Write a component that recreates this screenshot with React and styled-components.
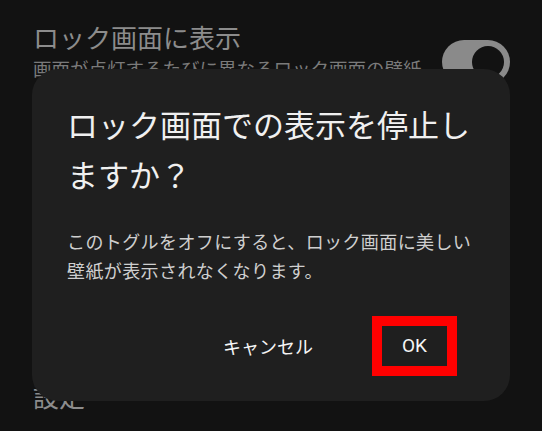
import styled, { createGlobalStyle } from 'styled-components';

const GlobalStyle = createGlobalStyle`
    html, body {
        margin: 0;
        padding: 0;
        background-color: #121212;
    }
    body {
        font-family: "Noto Sans CJK JP", "Noto Sans", sans-serif;
    }
`;

const Screen = styled.div`
    position: relative;
    width: 542px;
    height: 431px;
    overflow: hidden;
    background-color: #121212;
`;

const Page = styled.div`
    display: flex;
    flex-direction: column;
    padding: 19px 32px 0 33px;
`;

const SettingRow = styled.div`
    display: flex;
    justify-content: space-between;
    align-items: flex-start;
`;

const SettingText = styled.div`
    display: flex;
    flex-direction: column;
    width: 392px;
`;

const SettingTitle = styled.span`
    font-size: 26px;
    line-height: 36px;
    color: #8c8c8c;
`;

const SettingDesc = styled.span`
    font-size: 18.5px;
    line-height: 26px;
    color: #7a7a7a;
`;

const Toggle = styled.div`
    display: flex;
    align-items: center;
    justify-content: flex-end;
    width: 68px;
    height: 44px;
    margin-top: 21px;
    padding-right: 6px;
    box-sizing: border-box;
    border-radius: 22px;
    background-color: #8a8a8a;
`;

const Thumb = styled.div`
    width: 32px;
    height: 32px;
    border-radius: 50%;
    background-color: #121212;
`;

const SectionHeader = styled.span`
    margin-top: 271px;
    font-size: 26px;
    line-height: 36px;
    color: #8c8c8c;
`;

const Dialog = styled.div`
    position: absolute;
    left: 32px;
    top: 69px;
    width: 478px;
    box-sizing: border-box;
    padding: 30px 35px 25px 35px;
    border-radius: 26px;
    background-color: #1f1f1f;
`;

const DialogTitle = styled.h2`
    margin: 0;
    font-size: 31px;
    font-weight: 400;
    line-height: 50px;
    color: #f0f0f0;
`;

const DialogBody = styled.p`
    margin: 28px 0 0 0;
    font-size: 18px;
    letter-spacing: 0.4px;
    line-height: 29px;
    color: #cfcfcf;
`;

const Actions = styled.div`
    display: flex;
    justify-content: flex-end;
    align-items: center;
    gap: 59px;
    margin: 31px 18px 0 0;
`;

const TextButton = styled.button`
    padding: 0;
    border: none;
    background: none;
    font-family: inherit;
    font-size: 18px;
    font-weight: 400;
    line-height: 40px;
    color: #f5f5f5;
`;

const OkButton = styled(TextButton)`
    width: 85px;
    height: 60px;
    box-sizing: border-box;
    border: 10px solid #ff0000;
    font-family: Roboto, "Noto Sans", sans-serif;
    font-size: 19px;
`;

const App = () => {
    return (
        <Screen>
            <GlobalStyle />
            <Page>
                <SettingRow>
                    <SettingText>
                        <SettingTitle>ロック画面に表示</SettingTitle>
                        <SettingDesc>画面が点灯するたびに異なるロック画面の壁紙が表示されます</SettingDesc>
                    </SettingText>
                    <Toggle>
                        <Thumb />
                    </Toggle>
                </SettingRow>
                <SectionHeader>設定</SectionHeader>
            </Page>
            <Dialog>
                <DialogTitle>ロック画面での表示を停止しますか？</DialogTitle>
                <DialogBody>このトグルをオフにすると、ロック画面に美しい壁紙が表示されなくなります。</DialogBody>
                <Actions>
                    <TextButton>キャンセル</TextButton>
                    <OkButton>OK</OkButton>
                </Actions>
            </Dialog>
        </Screen>
    );
}

export default App
